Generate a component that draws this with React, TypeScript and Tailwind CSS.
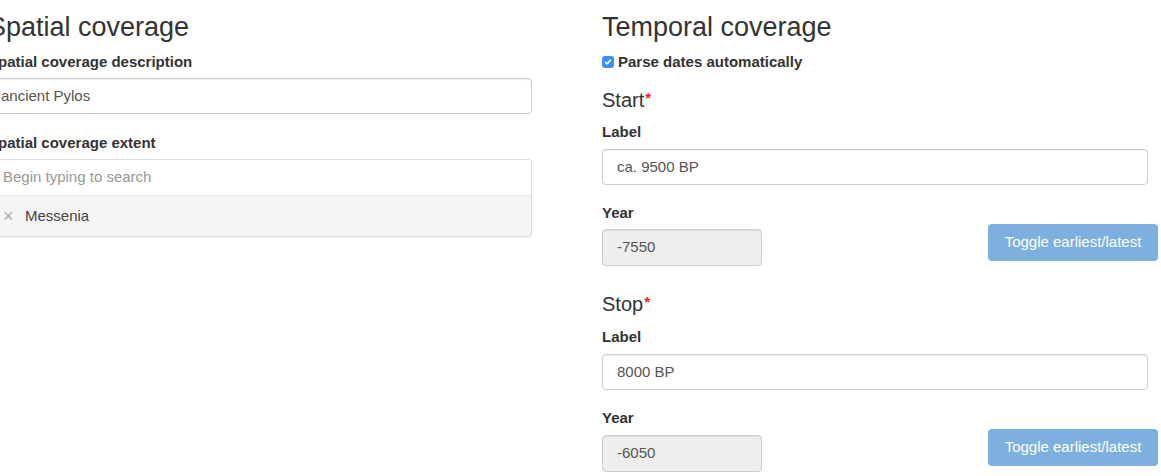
import React from 'react';

const font = "font-['Liberation_Sans','Helvetica_Neue',Arial,sans-serif]";

function TextBox({ value, readOnly = false, className = '' }: { value: string; readOnly?: boolean; className?: string }) {
  return (
    <div
      className={`flex items-center px-[14px] border border-[#ccc] rounded-[4px] shadow-[inset_0_1px_1px_rgba(0,0,0,0.075)] text-[15px] text-[#555] ${
        readOnly ? 'bg-[#eee]' : 'bg-white'
      } ${className}`}
    >
      {value}
    </div>
  );
}

function FieldLabel({ children, className = '' }: { children: React.ReactNode; className?: string }) {
  return <div className={`h-[20px] flex items-center text-[15px] font-bold text-[#333] ${className}`}>{children}</div>;
}

function ToggleButton({ className = '' }: { className?: string }) {
  return (
    <button
      disabled
      className={`w-[170px] h-[37px] rounded-[4px] bg-[#7db0de] text-white text-[15px] ${className}`}
    >
      Toggle earliest/latest
    </button>
  );
}

function DateBlock({ title, label, year, first }: { title: string; label: string; year: string; first: boolean }) {
  return (
    <div>
      <div className={`h-[24px] flex items-center text-[20px] text-[#333] ${first ? 'mt-[16px]' : 'mt-[26px]'}`}>
        {title}
        <span className="text-[#e22] text-[15px] font-bold self-start ml-[1px] leading-[14px] mt-[3px]">*</span>
      </div>
      <FieldLabel className={first ? 'mt-[10px]' : 'mt-[11px]'}>Label</FieldLabel>
      <TextBox value={label} className="mt-[7px] h-[36px] w-[546px]" />
      <FieldLabel className="mt-[18px]">Year</FieldLabel>
      <div className={`flex justify-between items-start ${first ? 'mt-[6px]' : 'mt-[7px]'}`}>
        <TextBox value={year} readOnly className="h-[37px] w-[160px]" />
        <ToggleButton className={first ? '-mt-[5px]' : '-mt-[6px]'} />
      </div>
    </div>
  );
}

export default function App() {
  return (
    <div className={`w-[1161px] h-[476px] overflow-hidden bg-white text-[#333] ${font}`}>
      <div className="flex gap-[70px] -ml-[12px]">
        {/* Spatial coverage */}
        <div className="w-[544px] shrink-0">
          <h3 className="h-[46px] pt-[12px] text-[27px] leading-[30px] text-[#333]">Spatial coverage</h3>
          <FieldLabel className="mt-[6px]">Spatial coverage description</FieldLabel>
          <TextBox value="ancient Pylos" className="mt-[6px] h-[36px] !px-[12px]" />
          <FieldLabel className="mt-[19px]">Spatial coverage extent</FieldLabel>
          <div className="mt-[6px] h-[78px] border border-[#ddd] rounded-[3px] overflow-hidden shadow-[0_1px_1px_rgba(0,0,0,0.05)]">
            <div className="h-[36px] flex items-center px-[14px] text-[15px] text-[#999] bg-white border-b border-[#e6e6e6]">
              Begin typing to search
            </div>
            <div className="h-[41px] flex items-center px-[14px] bg-[#f5f5f5] text-[15px] text-[#444]">
              <span className="text-[#aaa] text-[18px] w-[22px]">×</span>
              Messenia
            </div>
          </div>
        </div>

        {/* Temporal coverage */}
        <div className="w-[556px] shrink-0">
          <h3 className="h-[46px] pt-[12px] text-[27px] leading-[30px] text-[#333]">Temporal coverage</h3>
          <label className="mt-[6px] h-[20px] flex items-center gap-[4px] text-[15px] font-bold text-[#333]">
            <span className="w-[12px] h-[12px] rounded-[3px] bg-[#3d8ff0] flex items-center justify-center">
              <svg viewBox="0 0 12 12" className="w-[10px] h-[10px]" fill="none" stroke="white" strokeWidth="1.8" strokeLinecap="round" strokeLinejoin="round">
                <path d="M3 6.3l2 2 4-4.6" />
              </svg>
            </span>
            Parse dates automatically
          </label>
          <DateBlock title="Start" label="ca. 9500 BP" year="-7550" first />
          <DateBlock title="Stop" label="8000 BP" year="-6050" first={false} />
        </div>
      </div>
    </div>
  );
}
